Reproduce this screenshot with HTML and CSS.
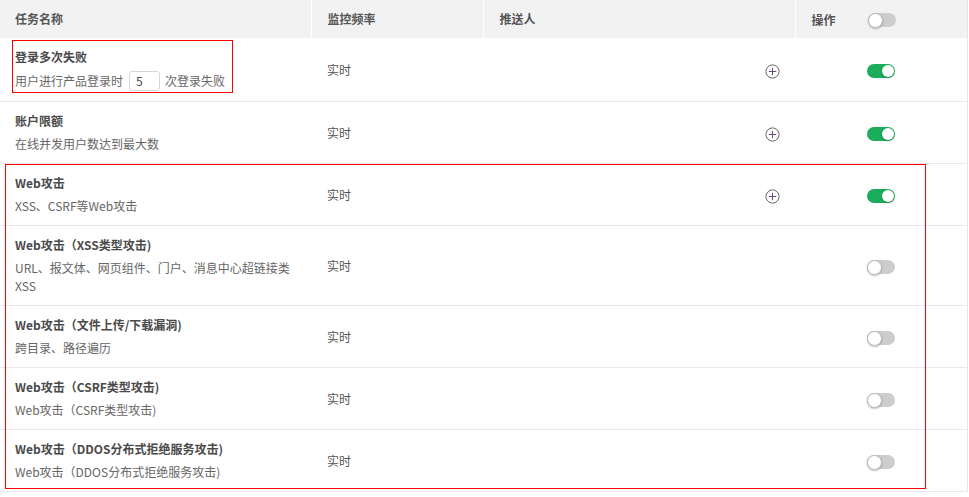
FILE: index.html
```html
<!DOCTYPE html>
<html lang="zh">
<head>
<meta charset="utf-8">
<link rel="stylesheet" href="styles.css">
</head>
<body>
<div class="wrap">
  <table class="tbl">
    <colgroup>
      <col class="c1"><col class="c2"><col class="c3"><col class="c4">
    </colgroup>
    <thead>
      <tr>
        <th class="first">任务名称</th>
        <th>监控频率</th>
        <th>推送人</th>
        <th><span class="op">操作</span><span class="sw off"><span class="knob"></span></span></th>
      </tr>
    </thead>
    <tbody>
      <tr>
        <td class="first"><div class="t">登录多次失败</div><div class="s s-inp">用户进行产品登录时<span class="inp">5</span>次登录失败</div></td>
        <td>实时</td>
        <td class="add"><svg class="plus" width="15" height="15" viewBox="0 0 15 15"><circle cx="7.5" cy="7.5" r="6.6" fill="none" stroke="#666" stroke-width="1"/><path d="M7.5 3.8v7.4M3.8 7.5h7.4" stroke="#6a4a7a" stroke-width="1"/></svg></td>
        <td class="sc"><span class="sw on"><span class="knob"></span></span></td>
      </tr>
      <tr>
        <td class="first"><div class="t">账户限额</div><div class="s">在线并发用户数达到最大数</div></td>
        <td>实时</td>
        <td class="add"><svg class="plus" width="15" height="15" viewBox="0 0 15 15"><circle cx="7.5" cy="7.5" r="6.6" fill="none" stroke="#666" stroke-width="1"/><path d="M7.5 3.8v7.4M3.8 7.5h7.4" stroke="#6a4a7a" stroke-width="1"/></svg></td>
        <td class="sc"><span class="sw on"><span class="knob"></span></span></td>
      </tr>
      <tr>
        <td class="first"><div class="t">Web攻击</div><div class="s">XSS、CSRF等Web攻击</div></td>
        <td>实时</td>
        <td class="add"><svg class="plus" width="15" height="15" viewBox="0 0 15 15"><circle cx="7.5" cy="7.5" r="6.6" fill="none" stroke="#666" stroke-width="1"/><path d="M7.5 3.8v7.4M3.8 7.5h7.4" stroke="#6a4a7a" stroke-width="1"/></svg></td>
        <td class="sc"><span class="sw on"><span class="knob"></span></span></td>
      </tr>
      <tr>
        <td class="first"><div class="t">Web攻击（XSS类型攻击)</div><div class="s">URL、报文体、网页组件、门户、消息中心超链接类<br>XSS</div></td>
        <td>实时</td>
        <td class="add"></td>
        <td class="sc"><span class="sw off"><span class="knob"></span></span></td>
      </tr>
      <tr>
        <td class="first"><div class="t">Web攻击（文件上传/下载漏洞)</div><div class="s">跨目录、路径遍历</div></td>
        <td>实时</td>
        <td class="add"></td>
        <td class="sc"><span class="sw off"><span class="knob"></span></span></td>
      </tr>
      <tr>
        <td class="first"><div class="t">Web攻击（CSRF类型攻击)</div><div class="s">Web攻击（CSRF类型攻击)</div></td>
        <td>实时</td>
        <td class="add"></td>
        <td class="sc"><span class="sw off"><span class="knob"></span></span></td>
      </tr>
      <tr>
        <td class="first"><div class="t">Web攻击（DDOS分布式拒绝服务攻击)</div><div class="s">Web攻击（DDOS分布式拒绝服务攻击)</div></td>
        <td>实时</td>
        <td class="add"></td>
        <td class="sc"><span class="sw off"><span class="knob"></span></span></td>
      </tr>
    </tbody>
  </table>
  <div class="mark m1"></div>
  <div class="mark m2"></div>
</div>
</body>
</html>
```
FILE: styles.css
```css
html, body {
  margin: 0;
  padding: 0;
  background: #fff;
}
body {
  font-family: "Noto Sans CJK SC", "Noto Sans", sans-serif;
  font-size: 12px;
  color: #555;
}
.wrap {
  position: relative;
  width: 967px;
}
.tbl {
  border-collapse: collapse;
  table-layout: fixed;
  width: 967px;
  border-right: 1px solid #e6e6e6;
}
.c1 { width: 311px; }
.c2 { width: 172px; }
.c3 { width: 312px; }
.c4 { width: 172px; }
th {
  height: 38px;
  padding: 0 16px;
  background: #f2f2f2;
  text-align: left;
  font-weight: bold;
  color: #555;
  line-height: 18px;
  border-left: 1px solid #fff;
  vertical-align: middle;
}
th.first { border-left: none; padding-left: 15px; }
td {
  padding: 10px 16px;
  border-bottom: 1px solid #e8e8ee;
  vertical-align: middle;
  line-height: 18px;
  color: #555;
}
td.first { padding-left: 15px; }
.t {
  font-weight: bold;
  color: #4a4a4a;
  line-height: 18px;
}
.s {
  margin-top: 5px;
  line-height: 18px;
  color: #666;
}
.s-inp {
  display: flex;
  align-items: center;
  height: 20px;
  margin-top: 4px;
  padding-top: 1px;
}
.inp {
  display: inline-block;
  box-sizing: border-box;
  width: 31px;
  height: 20px;
  line-height: 18px;
  margin: 0 5px 0 6px;
  padding: 0 6px;
  border: 1px solid #d6d6d6;
  border-radius: 3px;
  color: #444;
  font-size: 12px;
}
td.add {
  text-align: right;
  padding-right: 15px;
}
.plus { display: inline-block; vertical-align: middle; }
.op { display: inline-block; width: 56px; vertical-align: middle; }
td.sc { padding-left: 72px; }
.sw {
  position: relative;
  display: inline-block;
  width: 28px;
  height: 14px;
  border-radius: 7px;
  vertical-align: middle;
}
.sw.on { background: #1cad5c; }
.sw.off { background: #cdcdcd; }
.knob {
  position: absolute;
  top: 1px;
  width: 12px;
  height: 12px;
  border-radius: 50%;
  background: #fff;
  box-shadow: 0 1px 2px rgba(0,0,0,0.25);
}
.sw.on .knob { right: 1px; }
.sw.off .knob { left: 0; top: 0; width: 13px; height: 13px; border: 0.5px solid #bbb; }
.mark {
  position: absolute;
  border: 1px solid #f00;
  pointer-events: none;
}
.m1 { left: 12px; top: 40px; width: 219px; height: 51px; }
.m2 { left: 5px; top: 164px; width: 919px; height: 323px; }
```
